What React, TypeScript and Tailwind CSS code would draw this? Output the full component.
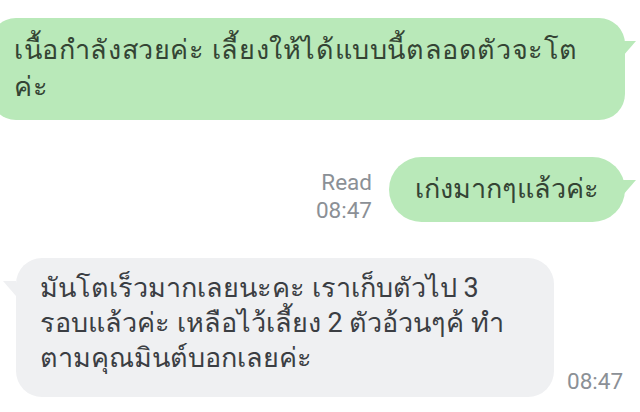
import React from "react";

export default function App() {
  return (
    <div className="w-[640px] h-[412px] bg-white overflow-hidden font-['Roboto','Noto_Sans',sans-serif]">
      <div className="flex flex-col pt-[18px]">
        <div className="relative ml-[-10px] w-[635px] h-[102px] rounded-[26px] bg-[#b9e9b9] pl-[24px] pt-[14px] text-[27px] leading-[37px] tracking-[0.6px] text-[#344434]">
          <svg className="absolute right-[-12px] top-[23px]" width="14" height="16" viewBox="0 0 14 16">
            <polygon points="0,0 13,0 0,15" fill="#b9e9b9" />
          </svg>
          <p>เนื้อกำลังสวยค่ะ เลี้ยงให้ได้แบบนี้ตลอดตัวจะโต</p>
          <p>ค่ะ</p>
        </div>

        <div className="mt-[37px] flex items-end justify-end pr-[15px] gap-[17px]">
          <div className="text-right text-[22.5px] leading-[28px] text-[#8b9096] mb-[-2px]">
            <p>Read</p>
            <p>08:47</p>
          </div>
          <div className="relative h-[65px] rounded-full bg-[#b9e9b9] px-[26px] flex items-center text-[27px] text-[#344434]">
            <svg className="absolute right-[-12px] top-[23px]" width="14" height="16" viewBox="0 0 14 16">
              <polygon points="0,0 13,0 0,15" fill="#b9e9b9" />
            </svg>
            <span>เก่งมากๆแล้วค่ะ</span>
          </div>
        </div>

        <div className="mt-[36px] flex items-end pl-[16px] gap-[13px]">
          <div className="relative w-[538px] h-[139px] rounded-[26px] bg-[#eff0f2] pl-[24px] pt-[13px] text-[27px] leading-[35px] text-[#3b3e43]">
            <svg className="absolute left-[-14px] top-[23px]" width="14" height="16" viewBox="0 0 14 16">
              <polygon points="14,0 1,0 14,15" fill="#eff0f2" />
            </svg>
            <p>มันโตเร็วมากเลยนะคะ เราเก็บตัวไป 3</p>
            <p>รอบแล้วค่ะ เหลือไว้เลี้ยง 2 ตัวอ้วนๆค้ ทำ</p>
            <p>ตามคุณมินต์บอกเลยค่ะ</p>
          </div>
          <div className="text-[22.5px] leading-[28px] text-[#8b9096] mb-[2px]">08:47</div>
        </div>
      </div>
    </div>
  );
}
